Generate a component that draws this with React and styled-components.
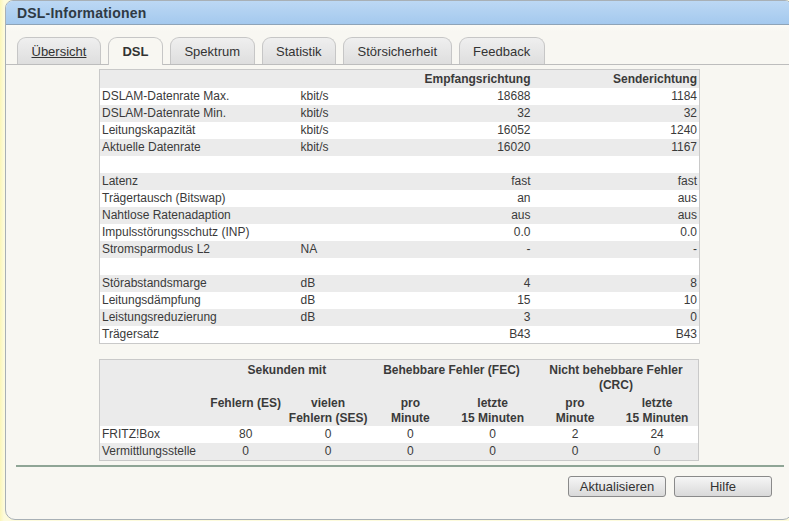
import React from "react";
import styled, { createGlobalStyle } from "styled-components";

const GlobalStyle = createGlobalStyle`
  body {
    margin: 0;
    background: linear-gradient(to right, #fbf6b8 0px, #fdfbdc 4px);
    font-family: "Liberation Sans", Arial, sans-serif;
    color: #3a3a3a;
  }
`;

const Panel = styled.div`
  margin-left: 5px;
  width: 786px;
  height: 518px;
  border: 1px solid #a8b0b6;
  border-radius: 8px 8px 10px 10px;
  background: #f8f7f2;
  overflow: hidden;
  display: flex;
  flex-direction: column;
`;

const Header = styled.div`
  height: 23px;
  background: linear-gradient(#bcd8f4, #a4c9ee);
  border-bottom: 1px solid #8ea4b8;
  padding-left: 11px;
  display: flex;
  align-items: center;

  h1 {
    margin: 0;
    font-size: 14px;
    font-weight: bold;
    color: #2f3a44;
    letter-spacing: 0.2px;
  }
`;

const TabBar = styled.div`
  display: flex;
  gap: 7px;
  padding: 12px 0 0 11px;
  border-bottom: 1px solid #bdbdbd;
  background: linear-gradient(#fcfbf6 0px, #f8f7f2 6px);
`;

const Tab = styled.div`
  padding: 0 13.5px;
  display: flex;
  align-items: center;
  border: 1px solid #c6c6c6;
  border-bottom: none;
  border-radius: 9px 9px 0 0;
  font-size: 13px;
  color: #333;
  margin-bottom: ${(p) => (p.$active ? "-1px" : "0")};
  height: ${(p) => (p.$active ? "27px" : "26px")};
  font-weight: ${(p) => (p.$active ? "bold" : "normal")};
  text-decoration: ${(p) => (p.$link ? "underline" : "none")};
  background: ${(p) =>
    p.$active ? "#f8f7f2" : "linear-gradient(#efefef, #dedede)"};
`;

const Content = styled.div`
  flex: 1;
  display: flex;
  flex-direction: column;
  padding-top: 4px;
`;

const DataTable = styled.table`
  margin-left: 93px;
  width: 600px;
  border-collapse: collapse;
  border: 1px solid #c9c9c9;
  font-size: 12px;
  color: #3a3a3a;
  table-layout: fixed;

  th {
    font-weight: bold;
    padding: 0 2px;
  }

  td {
    padding: 0 2px;
    height: 17px;
    line-height: 17px;
    white-space: nowrap;
  }

  tbody tr:nth-child(even) {
    background: #ebebeb;
  }
  tbody tr:nth-child(odd) {
    background: #ffffff;
  }
`;

const InfoTable = styled(DataTable)`
  thead tr {
    background: #ebebeb;
  }
  th {
    height: 18px;
    line-height: 18px;
    text-align: right;
  }
  td.num {
    text-align: right;
  }
`;

const ErrorTable = styled(DataTable)`
  margin-top: 15px;

  thead tr {
    background: #ebebeb;
  }
  th {
    text-align: center;
    vertical-align: top;
    line-height: 15px;
    padding: 3px 2px 0;
  }
  thead tr + tr th {
    white-space: nowrap;
  }
  td.num {
    text-align: center;
  }
`;

const Separator = styled.div`
  margin: 4px 8px 0 10px;
  height: 2px;
  background: #8fa596;
`;

const ButtonRow = styled.div`
  display: flex;
  justify-content: flex-end;
  gap: 8px;
  padding: 9px 20px 0 0;
`;

const Button = styled.button`
  width: 98px;
  height: 21px;
  border: 1px solid #8a8a8a;
  border-radius: 3px;
  background: linear-gradient(#f6f6f6, #d9d9d9);
  font-family: "Liberation Sans", Arial, sans-serif;
  font-size: 13px;
  color: #333;
  padding: 0;
`;

const tabs = [
  { label: "Übersicht", link: true },
  { label: "DSL", active: true },
  { label: "Spektrum" },
  { label: "Statistik" },
  { label: "Störsicherheit" },
  { label: "Feedback" },
];

const infoRows = [
  ["DSLAM-Datenrate Max.", "kbit/s", "18688", "1184"],
  ["DSLAM-Datenrate Min.", "kbit/s", "32", "32"],
  ["Leitungskapazität", "kbit/s", "16052", "1240"],
  ["Aktuelle Datenrate", "kbit/s", "16020", "1167"],
  ["", "", "", ""],
  ["Latenz", "", "fast", "fast"],
  ["Trägertausch (Bitswap)", "", "an", "aus"],
  ["Nahtlose Ratenadaption", "", "aus", "aus"],
  ["Impulsstörungsschutz (INP)", "", "0.0", "0.0"],
  ["Stromsparmodus L2", "NA", "-", "-"],
  ["", "", "", ""],
  ["Störabstandsmarge", "dB", "4", "8"],
  ["Leitungsdämpfung", "dB", "15", "10"],
  ["Leistungsreduzierung", "dB", "3", "0"],
  ["Trägersatz", "", "B43", "B43"],
];

const errorRows = [
  ["FRITZ!Box", "80", "0", "0", "0", "2", "24"],
  ["Vermittlungsstelle", "0", "0", "0", "0", "0", "0"],
];

const App = () => {
  return (
    <>
      <GlobalStyle />
      <Panel>
        <Header>
          <h1>DSL-Informationen</h1>
        </Header>
        <TabBar>
          {tabs.map((t) => (
            <Tab key={t.label} $active={t.active} $link={t.link}>
              {t.label}
            </Tab>
          ))}
        </TabBar>
        <Content>
          <InfoTable>
            <colgroup>
              <col style={{ width: 199 }} />
              <col style={{ width: 100 }} />
              <col style={{ width: 134 }} />
              <col style={{ width: 167 }} />
            </colgroup>
            <thead>
              <tr>
                <th />
                <th />
                <th>Empfangsrichtung</th>
                <th>Senderichtung</th>
              </tr>
            </thead>
            <tbody>
              {infoRows.map((r, i) => (
                <tr key={i}>
                  <td>{r[0]}</td>
                  <td>{r[1]}</td>
                  <td className="num">{r[2]}</td>
                  <td className="num">{r[3]}</td>
                </tr>
              ))}
            </tbody>
          </InfoTable>

          <ErrorTable>
            <colgroup>
              <col style={{ width: 105 }} />
              <col />
              <col />
              <col />
              <col />
              <col />
              <col />
            </colgroup>
            <thead>
              <tr>
                <th />
                <th colSpan={2}>Sekunden mit</th>
                <th colSpan={2}>Behebbare Fehler (FEC)</th>
                <th colSpan={2}>Nicht behebbare Fehler (CRC)</th>
              </tr>
              <tr>
                <th />
                <th>Fehlern (ES)</th>
                <th>
                  vielen
                  <br />
                  Fehlern (SES)
                </th>
                <th>
                  pro
                  <br />
                  Minute
                </th>
                <th>
                  letzte
                  <br />
                  15 Minuten
                </th>
                <th>
                  pro
                  <br />
                  Minute
                </th>
                <th>
                  letzte
                  <br />
                  15 Minuten
                </th>
              </tr>
            </thead>
            <tbody>
              {errorRows.map((r) => (
                <tr key={r[0]}>
                  {r.map((c, j) => (
                    <td key={j} className={j ? "num" : undefined}>
                      {c}
                    </td>
                  ))}
                </tr>
              ))}
            </tbody>
          </ErrorTable>

          <Separator />
          <ButtonRow>
            <Button>Aktualisieren</Button>
            <Button>Hilfe</Button>
          </ButtonRow>
        </Content>
      </Panel>
    </>
  );
};

export default App;
